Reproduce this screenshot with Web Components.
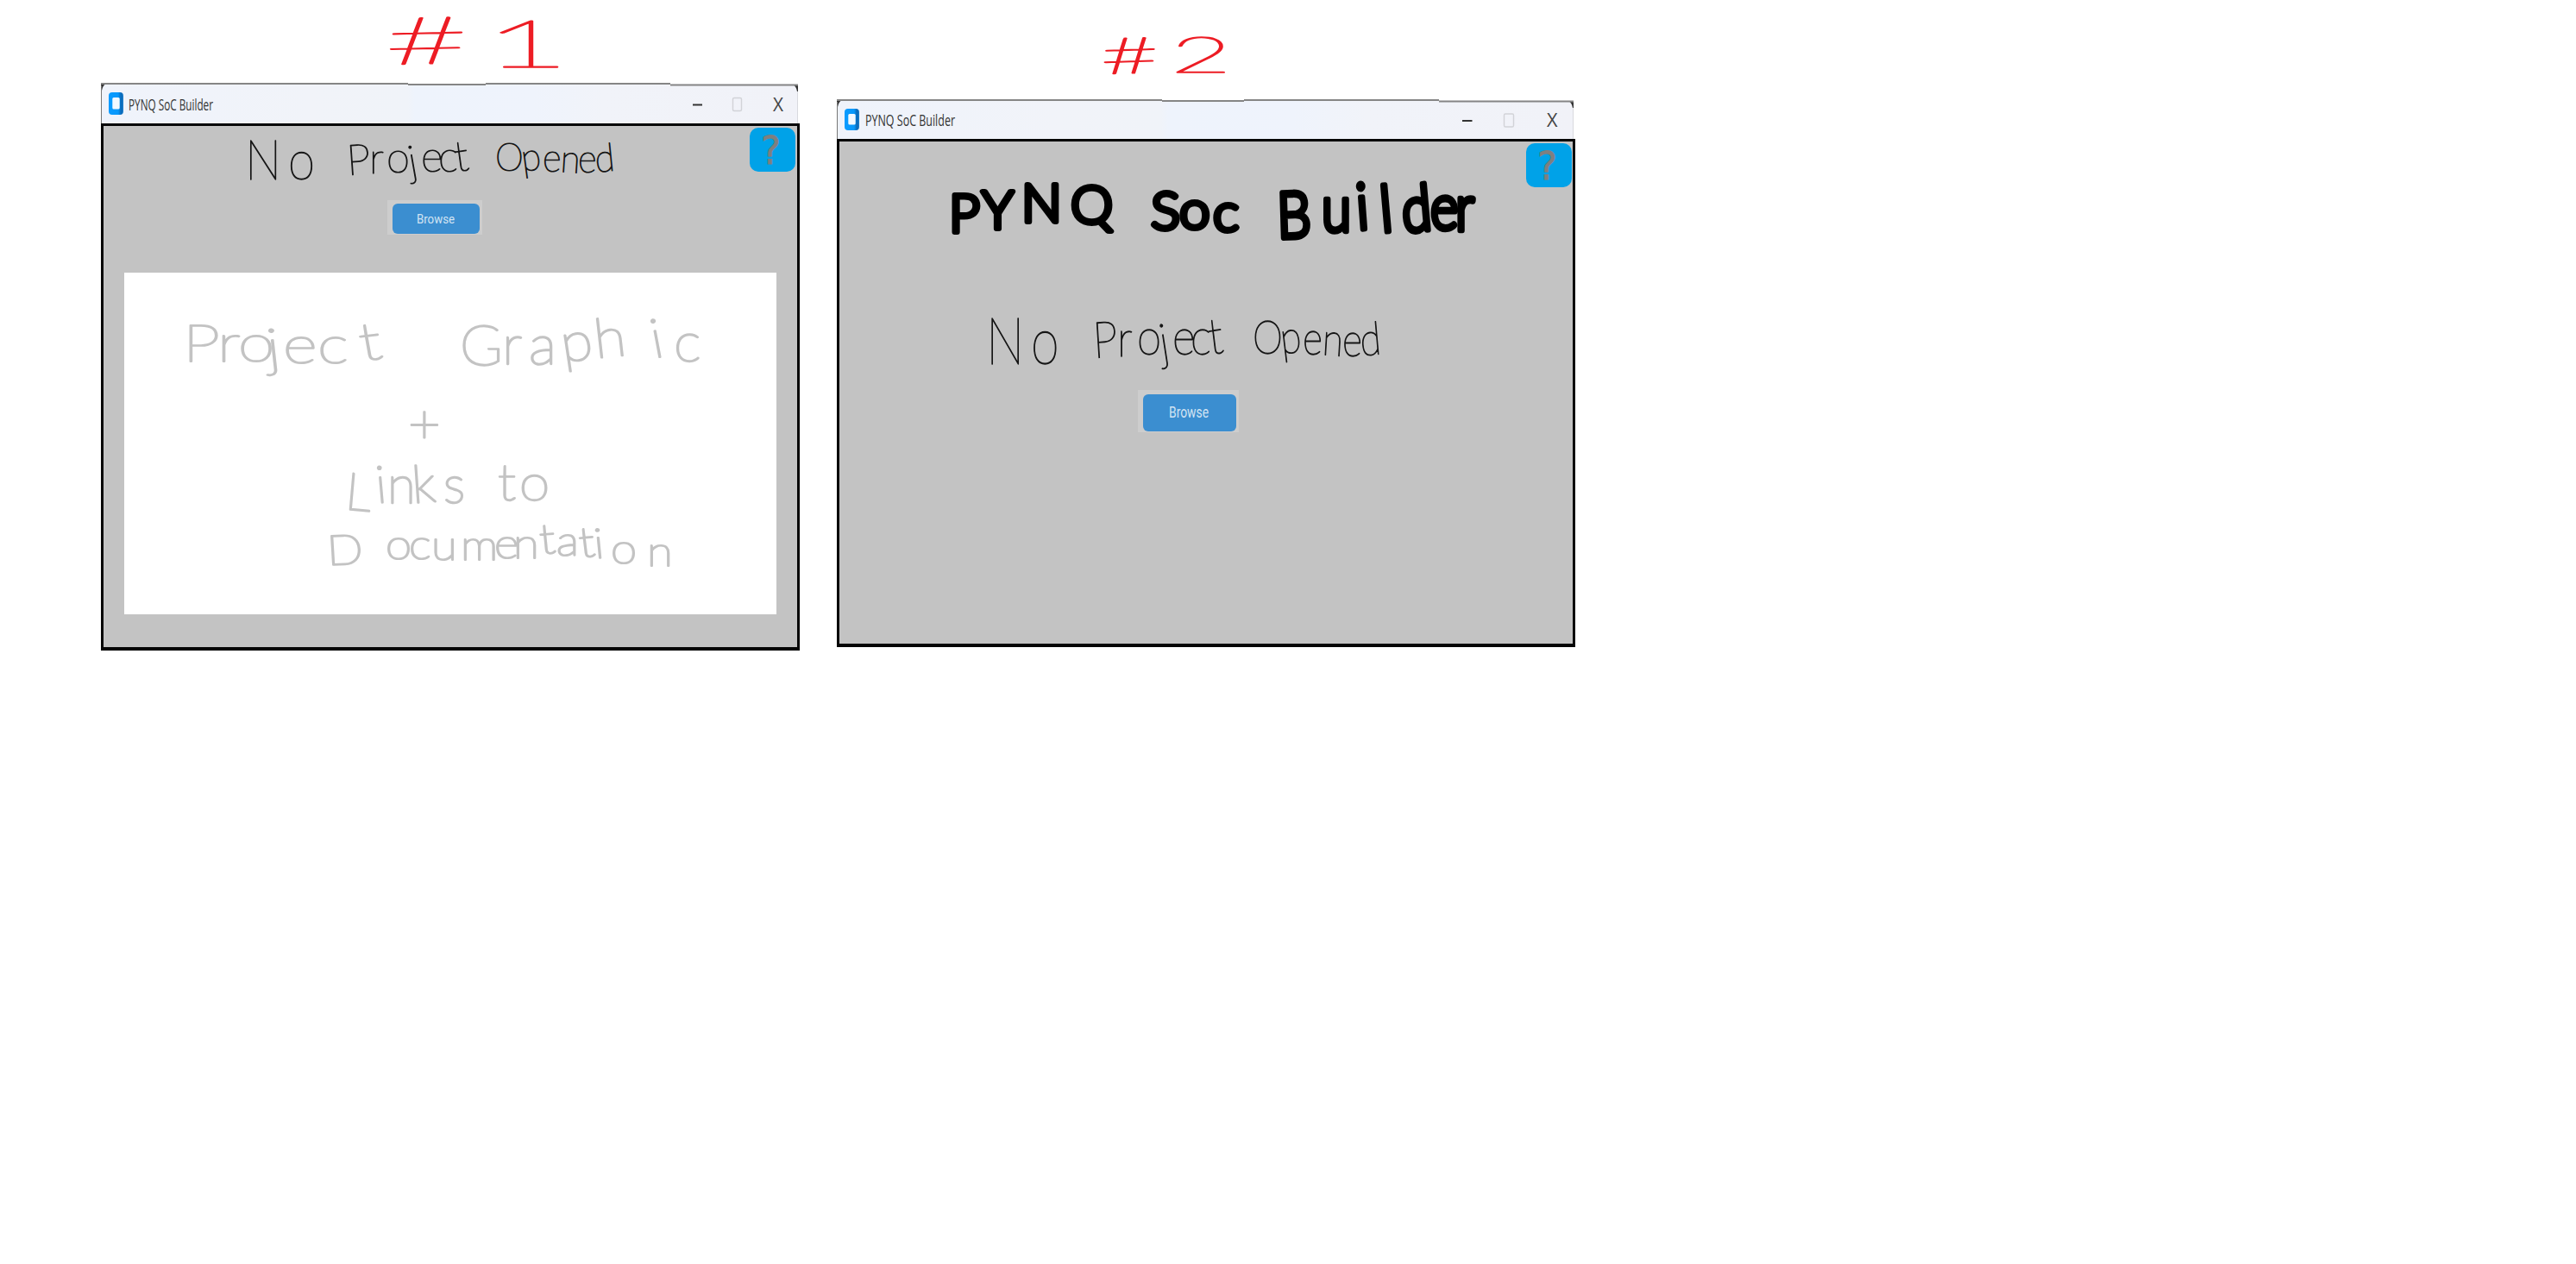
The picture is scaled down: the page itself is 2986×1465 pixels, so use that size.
<!DOCTYPE html>
<html lang="en">
<head>
<meta charset="utf-8">
<title>PYNQ SoC Builder – start screen sketches</title>
<style>
  html, body { margin: 0; background: #fff; }
  body { font-family: "Open Sans", "Liberation Sans", sans-serif; min-height: 1465px; }
</style>
</head>
<body>
<sketch-board>
  <sketch-column style="width:810px;margin-left:117px">
    <ink-note name="one"></ink-note>
    <app-window variant="one">
      <ink-note name="status1"></ink-note>
      <browse-button style="--pad:4px 3px 0 6px;--w:110px;--h:40px;--left:329px;--bh:35px" label="Browse" size="15.5" span="44"></browse-button>
      <graphic-panel><ink-note name="panel"></ink-note></graphic-panel>
    </app-window>
  </sketch-column>
  <sketch-column style="width:856px;margin-left:43px">
    <ink-note name="two"></ink-note>
    <app-window variant="two">
      <ink-note name="heading"></ink-note>
      <ink-note name="status2"></ink-note>
      <browse-button style="--pad:5px 3px 0 6px;--w:117px;--h:49px;--left:346px;--bh:43px" label="Browse" size="18.5" span="46"></browse-button>
    </app-window>
  </sketch-column>
</sketch-board>

<script>
const shadow = (host, html) => { host.attachShadow({ mode: 'open' }).innerHTML = html; };

customElements.define('sketch-board', class extends HTMLElement {
  connectedCallback() {
    shadow(this, `<style>:host{display:flex;align-items:flex-start}</style><slot></slot>`);
  }
});

customElements.define('sketch-column', class extends HTMLElement {
  connectedCallback() {
    shadow(this, `<style>:host{display:flex;flex-direction:column;flex:none}</style><slot></slot>`);
  }
});

/* Each note has a view box in board coordinates; every word lists the pen position and tilt of its letters. */
const RED = '#ed1c24', INK = '#151515', GREY = '#c3c3c3';
const NOTES = {
  one: { box: [117, 0, 810, 96], color: RED, pen: 2.6, weight: 100, words: [
    { t: '#1', x: [447, 560], y: [75, 78], r: [-3, 0], s: 76, sx: 2.3 } ] },
  two: { box: [970, 0, 856, 115], color: RED, pen: 2.6, weight: 100, words: [
    { t: '#2', x: [1277, 1357], y: [86, 84], r: [-4, 0], s: 58, sx: 2.1 } ] },
  status1: { box: [120, 146, 804, 86], color: INK, pen: 1.2, weight: 100, words: [
    { t: 'No', x: [284, 334], y: [208], s: 64, sx: .88 },
    { t: 'Project', x: [403, 428, 448, 476, 488, 508, 529], y: [203, 201, 200, 204, 199, 199, 199], r: [-4, 0, 0, -10, 0, 0, -8], s: 49, sx: 1 },
    { t: 'Opened', x: [574, 606, 629, 649, 670, 691], y: [198, 199, 199, 199, 200, 200], r: [0, -8, 0, 4, 0, -6], s: 45, sx: .93 } ] },
  status2: { box: [973, 328, 850, 124], color: INK, pen: 1.2, weight: 100, words: [
    { t: 'No', x: [1143, 1195], y: [422], s: 76, sx: .78 },
    { t: 'Project', x: [1268, 1295, 1318, 1347, 1359, 1380, 1403], y: [415, 413, 411, 417, 411, 411, 411], r: [-4, 0, 0, -10, 0, 0, -8], s: 58, sx: .88 },
    { t: 'Opened', x: [1452, 1486, 1510, 1532, 1556, 1578], y: [410, 411, 411, 411, 413, 413], r: [0, -8, 0, 4, 0, -6], s: 53, sx: .84 } ] },
  heading: { box: [973, 164, 850, 164], color: '#000', pen: 6, weight: 300, words: [
    { t: 'PYNQ', x: [1100, 1138, 1184, 1241], y: [269, 265, 257, 259], r: [0, 0, 0, 0], s: 62, sx: 1 },
    { t: 'Soc', x: [1334, 1367, 1406], y: [266, 265, 268], s: 62, sx: 1.03 },
    { t: 'Builder', x: [1481, 1532, 1574, 1602, 1627, 1658, 1687], y: [276, 268, 266, 269, 270, 266, 267], r: [-2, 0, -5, -6, -6, 0, 0], s: 74, sx: .84 } ] },
  panel: { box: [144, 316, 756, 396], color: GREY, pen: 2.4, weight: 100, words: [
    { t: 'Project', x: [212, 252, 276, 311, 328, 368, 420], y: [419, 419, 419, 424, 421, 421, 418], r: [0, 0, 0, -5, 0, 0, -8], s: 60, sx: 1.28 },
    { t: 'Graphic', x: [533, 582, 613, 653, 691, 758, 781], y: [423, 422, 422, 420, 415, 415, 419], r: [0, 0, 0, -8, -6, -10, 0], s: 63, sx: 1.07 },
    { t: '+', x: [473], y: [513], s: 62, sx: 1.05 },
    { t: 'Links', x: [399, 437, 449, 479, 514], y: [590, 583, 583, 583, 583], r: [5, -5, 0, -4, 0], s: 60, sx: 1 },
    { t: 'to', x: [577, 602], y: [580], s: 58, sx: 1.1 },
    { t: 'Documentation', x: [380, 447, 474, 500, 534, 573, 595, 627, 645, 673, 690, 708, 750], y: [655, 648, 648, 649, 649, 647, 647, 642, 644, 646, 647, 653, 656], r: [-3, 0, 0, 0, 0, 0, 0, -5, 0, -6, -5, 0, 0], s: 48, sx: 1.14 } ] }
};

customElements.define('ink-note', class extends HTMLElement {
  connectedCallback() {
    const n = NOTES[this.getAttribute('name')], [, , w, h] = n.box;
    const words = n.words.map(d =>
      `<text transform="scale(${d.sx} 1)" font-size="${d.s}" x="${d.x.map(v => (v / d.sx).toFixed(1)).join(' ')}" y="${d.y.join(' ')}"${d.r ? ` rotate="${d.r.join(' ')}"` : ''}>${d.t}</text>`).join('');
    shadow(this, `<style>
      :host{display:block;flex:none;width:${w}px;height:${h}px}
      svg{display:block;overflow:visible}
      text{font-family:Lato,"Open Sans",sans-serif;font-weight:${n.weight};fill:${n.color};stroke:${n.color};stroke-width:${n.pen}px;stroke-linecap:round;stroke-linejoin:round;vector-effect:non-scaling-stroke}
    </style><svg width="${w}" height="${h}" viewBox="${n.box.join(' ')}">${words}</svg>`);
  }
});

const BARS = {
  one: { w: 810, h: 47, body: 611, icon: [9, 11, 17, 26], title: [32, 32.2, 98, 19], min: [686, 25.5, 11], max: [732.5, 17.5, 10, 15], x: [779, 33, 12, 22],
    top: [[0, 356, 0], [356, 90, 1], [446, 214, 0], [660, 148, 1.5]], help: [749, 2] },
  two: { w: 856, h: 46, body: 589, icon: [9, 11, 17, 25], title: [33, 31.3, 104, 19], min: [725, 25, 11.5], max: [773.5, 17, 11, 15], x: [823, 32.3, 12.5, 21.5],
    top: [[0, 377, 0], [377, 95, 1], [472, 226, 0], [698, 156, 1.5]], help: [796, 2] }
};

customElements.define('title-bar', class extends HTMLElement {
  connectedCallback() {
    const b = BARS[this.getAttribute('variant')], [ix, iy, iw, ih] = b.icon, [tx, ty, tl, ts] = b.title;
    const edge = b.w - 2;
    shadow(this, `<style>
      :host{display:block;flex:none;height:${b.h}px}
      svg{display:block}
      text{font-family:"Open Sans","Liberation Sans",sans-serif}
    </style>
    <svg width="${b.w}" height="${b.h}" viewBox="0 0 ${b.w} ${b.h}">
      <defs>
        <linearGradient id="bar"><stop offset="0" stop-color="#eff3fb"/><stop offset=".3" stop-color="#f1f3f9"/><stop offset=".44" stop-color="#f0f3f9"/><stop offset=".45" stop-color="#eef3fc"/><stop offset=".62" stop-color="#eff3fc"/><stop offset=".72" stop-color="#f1f3f9"/><stop offset="1" stop-color="#f1f2f8"/></linearGradient>
        <linearGradient id="ic"><stop offset="0" stop-color="#0a9bff"/><stop offset=".65" stop-color="#0898fa"/><stop offset=".85" stop-color="#0868b8"/><stop offset="1" stop-color="#1f7fca"/></linearGradient>
      </defs>
      <rect x="0" y="1.5" width="${edge}" height="${b.h}" fill="url(#bar)"/>
      <path d="M0 1h6Q2 3 1 9H0Z" fill="#333"/>
      <path d="M${edge} 2h-6q4 2 5 8h1Z" fill="#333"/>
      ${b.top.map(([x, w, y]) => `<rect x="${x}" y="${y}" width="${w}" height="2" fill="#858585"/>`).join('')}
      <rect x="0" y="3" width="1" height="${b.h}" fill="#777"/>
      <rect x="${edge - 1}" y="10" width="1" height="${b.h}" fill="#d8d9de"/>
      <rect x="${ix}" y="${iy}" width="${iw}" height="${ih}" rx="4" fill="url(#ic)"/>
      <rect x="${ix + 4.3}" y="${iy + 6}" width="8.4" height="${ih - 12.5}" rx="1.5" fill="#f4f9ff"/>
      <text x="${tx}" y="${ty}" font-size="${ts}" textLength="${tl}" lengthAdjust="spacingAndGlyphs" fill="#333">PYNQ SoC Builder</text>
      <path d="M${b.min[0]} ${b.min[1]}h${b.min[2]}" stroke="#333" stroke-width="2"/>
      <rect x="${b.max[0]}" y="${b.max[1]}" width="${b.max[2]}" height="${b.max[3]}" rx="1.5" fill="none" stroke="#d2d3d8" stroke-width="1.4"/>
      <text x="${b.x[0]}" y="${b.x[1]}" font-size="${b.x[3]}" textLength="${b.x[2]}" lengthAdjust="spacingAndGlyphs" fill="#444">X</text>
    </svg>`);
  }
});

customElements.define('help-button', class extends HTMLElement {
  connectedCallback() {
    shadow(this, `<style>
      :host{display:block;width:53px;height:51px;background:#00a2e8;border-radius:10px}
      svg{display:block;overflow:visible}
      text{font-family:"DejaVu Sans","Liberation Sans",sans-serif;font-size:44px;fill:#7f7f7f;stroke:#7f7f7f;stroke-width:.8px}
    </style><svg width="53" height="51"><text x="13" y="41.5" textLength="23" lengthAdjust="spacingAndGlyphs">?</text></svg>`);
  }
});

customElements.define('app-window', class extends HTMLElement {
  connectedCallback() {
    const v = this.getAttribute('variant'), b = BARS[v];
    shadow(this, `<style>
      :host{display:flex;flex-direction:column;flex:none;width:${b.w}px}
      main{position:relative;box-sizing:border-box;height:${b.body}px;display:flex;flex-direction:column;align-items:flex-start;background:#c3c3c3;border:3px solid #050505;border-bottom-width:4px}
      help-button{position:absolute;left:${b.help[0]}px;top:${b.help[1]}px}
    </style><title-bar variant="${v}"></title-bar><main><slot></slot><help-button></help-button></main>`);
  }
});

customElements.define('browse-button', class extends HTMLElement {
  connectedCallback() {
    const size = this.getAttribute('size'), span = this.getAttribute('span');
    shadow(this, `<style>
      :host{display:block;flex:none;box-sizing:border-box;width:var(--w);height:var(--h);margin-left:var(--left);padding:var(--pad);background:#cdcdcd}
      div{display:flex;align-items:center;justify-content:center;height:var(--bh);background:#3b8ed0;border-radius:6px}
      svg{display:block;overflow:visible;margin-right:2px}
      text{font-family:Roboto,"Liberation Sans",sans-serif;fill:#d3e4f3}
    </style><div><svg width="${span}" height="26"><text x="0" y="18" font-size="${size}" textLength="${span}" lengthAdjust="spacingAndGlyphs">${this.getAttribute('label')}</text></svg></div>`);
  }
});

customElements.define('graphic-panel', class extends HTMLElement {
  connectedCallback() {
    shadow(this, `<style>:host{display:block;flex:none;width:756px;height:396px;margin:44px 0 0 24px;background:#fff}</style><slot></slot>`);
  }
});
</script>
</body>
</html>
